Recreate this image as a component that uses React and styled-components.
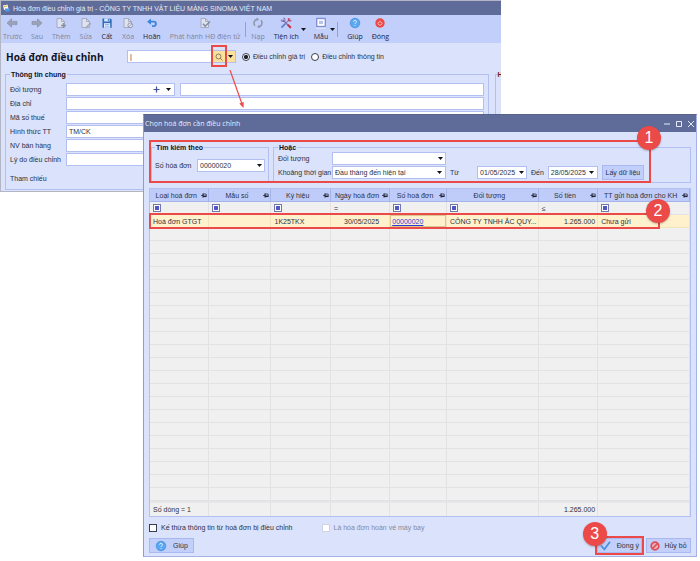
import React from 'react'
import styled, { createGlobalStyle } from 'styled-components'

const GlobalStyle = createGlobalStyle`
  * {
    box-sizing: border-box;
  }
  body {
    margin: 0;
    background-color: #fff;
    color: #2c3142;
    font-family: "Liberation Sans", Arial, sans-serif;
    font-size: 7px;
    line-height: 9px;
  }
  button, input, select {
    font: inherit;
    color: inherit;
    margin: 0;
  }
`

const UI_FONT = '"Open Sans", "Noto Sans", sans-serif'
const RED = '#eb4a48'

const Desktop = styled.main`
  position: relative;
  min-height: 100vh;
  overflow: hidden;
`

const MainWindow = styled.section`
  width: 71.5%;
  background-color: #dae2fc;
  border: 1px solid #b3b6c4;
  border-right: none;
  overflow: hidden;
`

const TitleBar = styled.header`
  display: flex;
  align-items: center;
  gap: ${({ $tall }) => ($tall ? '4px' : '3px')};
  height: ${({ $tall }) => ($tall ? '17px' : '14px')};
  padding: 0 ${({ $tall }) => ($tall ? '1px' : '2px')};
  background-color: #5f6c99;
  color: #e6eafa;
  font-family: ${({ $tall }) => ($tall ? UI_FONT : 'inherit')};
`

const TitleText = styled.span`
  flex: 1;
  white-space: nowrap;
`

const Toolbar = styled.nav`
  display: flex;
  align-items: center;
  gap: 9px;
  height: 28px;
  padding: 0 2px;
  background-color: #c2cffa;
  font-family: ${UI_FONT};
`

const ToolButton = styled.button`
  display: flex;
  flex-direction: column;
  align-items: center;
  gap: 3px;
  padding: 0;
  border: none;
  background-color: transparent;
  white-space: nowrap;
  color: ${({ disabled }) => (disabled ? '#7f859b' : '#20243c')};
`

const ToolGroup = styled.div`
  display: flex;
  align-items: center;
  gap: ${({ $gap }) => $gap || 2}px;
`

const ToolDivider = styled.span`
  width: 1px;
  height: 15px;
  background-color: #7fa9dc;
`

const HeadRow = styled.div`
  display: flex;
  align-items: center;
  height: 27px;
  padding-left: 5px;
`

const PageTitle = styled.h1`
  width: 121px;
  margin: 0;
  font-family: ${UI_FONT};
  font-size: 10px;
  line-height: 14px;
  font-weight: 700;
  color: #10131f;
  white-space: nowrap;
`

const Field = styled.div`
  display: flex;
  align-items: stretch;
  flex: ${({ $w }) => ($w ? `0 0 ${$w}px` : '1')};
  min-width: 0;
  height: 13px;
  background-color: #fff;
  border: 1px solid #b2bff0;
`

const FieldInput = styled.input`
  flex: 1;
  min-width: 0;
  padding: 0 0 0 2px;
  border: none;
  outline: none;
  background-color: transparent;
`

const FieldButton = styled.button`
  display: flex;
  align-items: center;
  justify-content: center;
  flex: 0 0 ${({ $wide }) => ($wide ? '12px' : '10px')};
  padding: 0;
  border: none;
  background-color: ${({ $gold }) => ($gold ? '#fbe19a' : 'transparent')};
`

const SelectBox = styled.div`
  display: grid;
  align-items: center;
  flex: 0 0 114px;
  height: 13px;
  background-color: #fff;
  border: 1px solid #b2bff0;

  select, svg {
    grid-area: 1 / 1;
  }
  select {
    appearance: none;
    width: 100%;
    padding: 0 12px 0 2px;
    border: none;
    outline: none;
    background-color: transparent;
  }
  svg {
    justify-self: end;
    margin-right: 3px;
    pointer-events: none;
  }
`

const SearchSlot = styled.div`
  position: relative;
  display: flex;
`

const Marker = styled.span`
  position: absolute;
  inset: ${({ $inset }) => $inset};
  height: ${({ $height }) => $height || 'auto'};
  border: 2px solid ${RED};
  pointer-events: none;
  z-index: 2;
`

const MarkerNumber = styled.span`
  position: absolute;
  top: -16px;
  ${({ $side }) => ($side === 'left' ? 'left: -14px;' : 'right: -12px;')}
  display: flex;
  align-items: center;
  justify-content: center;
  width: 24px;
  height: 24px;
  border-radius: 50%;
  background-color: ${RED};
  color: #fff;
  font-size: 16px;
  line-height: 16px;
  box-shadow: 0 1px 2px #00000040;
`

const Pointer = styled.svg`
  position: absolute;
  top: 19px;
  left: 16px;
  z-index: 3;
`

const Radio = styled.label`
  display: flex;
  align-items: center;
  gap: 3px;
  margin-left: 6px;
  white-space: nowrap;

  input {
    appearance: none;
    width: 8px;
    height: 8px;
    border: 1px solid #3a3f4f;
    border-radius: 50%;
    background-color: #fff;
  }
  input:checked {
    background-image: radial-gradient(#20242f 45%, #fff 55%);
  }
`

const MainBody = styled.div`
  display: flex;
  gap: 6px;
  padding: 0 0 1px 4px;
`

const Group = styled.fieldset`
  flex: ${({ $w }) => ($w ? `0 0 ${$w}px` : '1')};
  min-width: 0;
  margin: 0;
  padding: ${({ $pad }) => $pad || '0'};
  border: 1px solid #b2bff0;

  legend {
    padding: 0 1px;
    line-height: 9px;
    font-weight: 700;
    color: #10131f;
    white-space: nowrap;
  }
`

const CutGroup = styled(Group)`
  flex: 0 0 6px;
  border-right: none;

  legend {
    padding: 0;
    margin-left: 2px;
    color: #6b1f2c;
  }
`

const FormGrid = styled.div`
  display: grid;
  gap: 1px;
`

const FormRow = styled.div`
  display: flex;
  align-items: center;
  height: ${({ $tall }) => ($tall ? '22px' : '13px')};
`

const Label = styled.label`
  flex: 0 0 ${({ $w }) => $w}px;
  white-space: nowrap;
`

const Gap = styled.span`
  flex: 0 0 5px;
`

const Dialog = styled.section`
  position: absolute;
  top: 114px;
  left: 143px;
  right: 3px;
  background-color: #dae2fc;
  border: 1px solid #a5b2e6;
  border-top-color: #56628c;
  border-left-color: #8e9cd2;
`

const WindowButton = styled.button`
  display: flex;
  padding: 0 1px;
  border: none;
  background-color: transparent;
  color: #e6eafa;
`

const DialogBody = styled.div`
  padding: 8px 5px 3px;
`

const SearchPanel = styled.div`
  position: relative;
  display: flex;
  gap: 4px;
  height: 45px;
  padding: 3px 0 2px 2px;
`

const PeriodRow = styled.div`
  display: flex;
  align-items: center;
  gap: 4px;
  height: 14px;
`

const ActionButton = styled.button`
  display: flex;
  align-items: center;
  justify-content: center;
  gap: ${({ $gap }) => $gap || 6}px;
  min-width: ${({ $narrow }) => ($narrow ? '42px' : '45px')};
  height: 15px;
  padding: 0 2px;
  border: 1px solid #a9b8f0;
  background-color: #c2cffa;
  white-space: nowrap;
`

const GridWrap = styled.div`
  position: relative;
  margin-top: 3px;
  border: 1px solid #b2bff0;
`

const Grid = styled.table`
  width: 100%;
  table-layout: fixed;
  border-collapse: separate;
  border-spacing: 0;
  background-color: #f0f0f0;

  th, td {
    height: 13px;
    padding: 0 0 0 3px;
    border-right: 1px solid #e2e2e4;
    border-bottom: 1px solid #e2e2e4;
    text-align: left;
    font-weight: 400;
    white-space: nowrap;
    overflow: hidden;
  }
  thead th {
    padding: 0 1px;
    background-color: #bfccfa;
    border-color: #a4b3ea;
  }
  tfoot td {
    height: 15px;
    border-bottom: none;
    border-top: 2px solid #e6e6e8;
  }
  svg {
    display: block;
  }
`

const HeadCell = styled.div`
  display: flex;
  align-items: center;

  span {
    flex: 1;
    text-align: center;
  }
`

const InvoiceRow = styled.tr`
  td {
    background-color: #fff1cc;
    border-color: #f3e4bb;
  }
`

const Cell = styled.td`
  && {
    text-align: ${({ $align }) => $align || 'left'};
    ${({ $align }) => $align === 'right' && 'padding-right: 2px;'}
    ${({ $focus }) => $focus && 'box-shadow: inset 0 0 0 1px #d8c88f; padding-left: 2px;'}
  }
  a {
    color: #2b36d8;
  }
`

const Options = styled.div`
  display: flex;
  align-items: center;
  gap: 29px;
  height: 21px;
`

const Check = styled.label`
  display: flex;
  align-items: center;
  gap: 4px;
  white-space: nowrap;
  color: ${({ $off }) => ($off ? '#858a9c' : '#2c3142')};

  input {
    appearance: none;
    width: 8px;
    height: 8px;
    border: 1px solid ${({ $off }) => ($off ? '#cfd4e4' : '#3a3f4f')};
    background-color: #fff;
  }
`

const Footer = styled.footer`
  display: flex;
  align-items: center;
  gap: 4px;
`

const Confirm = styled.div`
  position: relative;
  margin-left: auto;
`

const Caret = () => (
  <svg width="5" height="3" viewBox="0 0 5 3"><path d="M0 0h5L2.5 3z" fill="#11131c" /></svg>
)

const ArrowIcon = ({ flip }) => (
  <svg width="12" height="12" viewBox="0 0 12 12">
    <path
      d="M1 6 5.5 1.8v2.6H11v3.2H5.5v2.6z"
      fill="#9aa1b8" stroke="#858ca4" strokeWidth="0.6"
      transform={flip ? 'rotate(180 6 6)' : undefined}
    />
  </svg>
)

const PageIcon = ({ mark }) => (
  <svg width="12" height="12" viewBox="0 0 12 12" fill="none" stroke="#a0a6b8" strokeWidth="0.9">
    <path d="M2 1.5h4.5L9.5 4.5v6H2z" fill="#dfe3ef" />
    <path d="M6.5 1.5v3h3" />
    {mark === 'add' && <path d="M8.5 6v5M6 8.5h5" stroke="#8a90a4" strokeWidth="1.4" />}
    {mark === 'edit' && <path d="M5.5 10.5 10 5.8l1 1-4.4 4z" fill="#b7bccb" />}
    {mark === 'delete' && <circle cx="8.3" cy="8.3" r="2.4" fill="#e4e6ef" stroke="#8a90a4" />}
    {mark === 'delete' && <path d="m6.8 9.8 3-3" stroke="#8a90a4" />}
    {mark === 'check' && <path d="m4 6.8 2.2 2.4L11 4.5" stroke="#858b9f" strokeWidth="1.6" />}
  </svg>
)

const SaveIcon = () => (
  <svg width="12" height="12" viewBox="0 0 12 12">
    <path d="M1.5 1.5h8l1.2 1.2v8H1.5z" fill="#2d6cb8" />
    <path d="M3.2 1.5h5.4v3H3.2z" fill="#dcecff" />
    <path d="M6.8 2h1v2h-1z" fill="#2d6cb8" />
    <path d="M3 6.2h6.2v4.5H3z" fill="#eef5ff" />
    <path d="M3.8 7.6h4.6M3.8 9.2h4.6" stroke="#5b93d4" strokeWidth="0.7" />
  </svg>
)

const UndoIcon = () => (
  <svg width="12" height="12" viewBox="0 0 12 12">
    <path d="M1 4.7 5 1.5v2.2h2.7a3 3 0 0 1 0 6.3H6V8.3h1.6a1.3 1.3 0 0 0 0-2.7H5v2.2z" fill="#3c86dc" />
  </svg>
)

const ReloadIcon = () => (
  <svg width="12" height="12" viewBox="0 0 12 12" fill="none" stroke="#9097aa" strokeWidth="1.6">
    <path d="M5.2 2.2A4 4 0 0 0 3 8.7M6.8 9.8A4 4 0 0 0 9 3.3" />
    <path d="M4.5.4 7 2.3 4.8 4.2zM7.5 7.8 5 9.8l2.5 1.8z" fill="#9097aa" stroke="none" />
  </svg>
)

const ToolsIcon = () => (
  <svg width="12" height="12" viewBox="0 0 12 12" fill="none" strokeLinecap="round">
    <path d="M3.2 3.2 10 10" stroke="#8d6fa8" strokeWidth="1.4" />
    <path d="M1.3 3a2 2 0 0 0 3.4.8A2 2 0 0 0 3.7 1" stroke="#8d6fa8" strokeWidth="1.1" />
    <path d="M10.2 1.8 6.5 5.3" stroke="#6a80c4" strokeWidth="1.1" />
    <path d="M5.2 6.8 2 10" stroke="#5f86d2" strokeWidth="1.8" />
    <path d="m8.3 8.3 2 2" stroke="#c6394e" strokeWidth="2.2" />
    <path d="M8.4 1.5a1.9 1.9 0 0 0 2.6 2.3" stroke="#c6394e" strokeWidth="1.1" />
  </svg>
)

const TemplateIcon = () => (
  <svg width="12" height="12" viewBox="0 0 12 12">
    <rect x="1" y="0.8" width="10" height="9.4" rx="1" fill="#8391d8" />
    <rect x="2.4" y="2.2" width="7.2" height="6.6" fill="#fff" />
    <rect x="4" y="3.8" width="4" height="3.2" fill="#b9c3ea" />
    <path d="M1.5 11.2h9" stroke="#f2f5ff" strokeWidth="0.9" />
  </svg>
)

const HelpIcon = () => (
  <svg width="12" height="12" viewBox="0 0 12 12">
    <circle cx="6" cy="6" r="4.8" fill="#5aa8f2" stroke="#3583d3" strokeWidth="0.6" />
    <path d="M4.6 4.7a1.4 1.4 0 1 1 2 1.3c-.5.2-.6.5-.6 1" fill="none" stroke="#fff" strokeWidth="0.8" />
    <circle cx="6" cy="8.5" r="0.5" fill="#fff" />
  </svg>
)

const PowerIcon = () => (
  <svg width="12" height="12" viewBox="0 0 12 12">
    <circle cx="6" cy="6" r="4.7" fill="#ee4444" />
    <path d="M4.6 4.8a2 2 0 1 0 2.8 0M6 3.6v2.2" fill="none" stroke="#ffd9d6" strokeWidth="0.8" />
  </svg>
)

const AppIcon = () => (
  <svg width="7" height="8" viewBox="0 0 7 8">
    <path d="M0 1.5 4.5.5l1 4.5-4.5 1z" fill="#f4f7ff" />
    <path d="M1 2.6 4 2" stroke="#e7b83c" strokeWidth="1.1" />
    <path d="M2 4.5h4.6V7.5H2z" fill="#4d9ae8" />
  </svg>
)

const SearchIcon = () => (
  <svg width="8" height="8" viewBox="0 0 8 8" fill="none" stroke="#77705c" strokeWidth="0.9">
    <circle cx="3.5" cy="3.5" r="2.5" />
    <path d="m5.3 5.3 2.2 2.2" />
  </svg>
)

const PinIcon = () => (
  <svg width="6" height="5" viewBox="0 0 6 5">
    <path d="M0 2.5h2M2 .2v4.6M2 1h3.2v2.6H2z" fill="none" stroke="#1c2030" strokeWidth="0.7" />
    <path d="M2 2.6h3.4v1.3H2z" fill="#1c2030" />
  </svg>
)

const FilterIcon = () => (
  <svg width="8" height="8" viewBox="0 0 8 8">
    <rect x="0.5" y="0.5" width="7" height="7" fill="#fff" stroke="#7377a8" />
    <rect x="2" y="2" width="4" height="4" fill="#5257c8" />
  </svg>
)

const AcceptIcon = () => (
  <svg width="11" height="11" viewBox="0 0 11 11">
    <path d="M1 5.5 4.3 9.3 10 1.8" fill="none" stroke="#4a90e0" strokeWidth="1.8" />
  </svg>
)

const CancelIcon = () => (
  <svg width="10" height="10" viewBox="0 0 10 10" fill="none" stroke="#dc4f58" strokeWidth="1.7">
    <circle cx="5" cy="5" r="3.8" fill="#eeb3bd" />
    <path d="m2.5 7.5 5-5" />
  </svg>
)

const columns = [
  { name: 'Loại hoá đơn', width: '11%', filter: 'box' },
  { name: 'Mẫu số', width: '11.5%', filter: 'box' },
  { name: 'Ký hiệu', width: '11%', filter: 'box' },
  { name: 'Ngày hoá đơn', width: '11%', filter: '=' },
  { name: 'Số hoá đơn', width: '10.5%', filter: 'box' },
  { name: 'Đối tượng', width: '17%', filter: 'box' },
  { name: 'Số tiền', width: '11%', filter: '≤' },
  { name: 'TT gửi hoá đơn cho KH', width: '17%', filter: 'box' },
]

const EMPTY_ROWS = 21

function MainToolbar() {
  return (
    <Toolbar>
      <ToolButton disabled><ArrowIcon />Trước</ToolButton>
      <ToolButton disabled><ArrowIcon flip />Sau</ToolButton>
      <ToolButton disabled><PageIcon mark="add" />Thêm</ToolButton>
      <ToolButton disabled><PageIcon mark="edit" />Sửa</ToolButton>
      <ToolButton><SaveIcon />Cất</ToolButton>
      <ToolButton disabled><PageIcon mark="delete" />Xóa</ToolButton>
      <ToolButton><UndoIcon />Hoãn</ToolButton>
      <ToolGroup $gap={5}>
        <ToolButton disabled><PageIcon mark="check" />Phát hành HĐ điện tử</ToolButton>
        <ToolDivider />
        <ToolButton disabled><ReloadIcon />Nạp</ToolButton>
      </ToolGroup>
      <ToolGroup $gap={8}>
        <ToolGroup>
          <ToolButton><ToolsIcon />Tiện ích</ToolButton>
          <Caret />
        </ToolGroup>
        <ToolGroup>
          <ToolButton><TemplateIcon />Mẫu</ToolButton>
          <Caret />
          <ToolDivider />
        </ToolGroup>
      </ToolGroup>
      <ToolButton><HelpIcon />Giúp</ToolButton>
      <ToolButton><PowerIcon />Đóng</ToolButton>
    </Toolbar>
  )
}

function TextRow({ id, label, value = '' }) {
  return (
    <FormRow>
      <Label $w={56} htmlFor={id}>{label}</Label>
      <Field><FieldInput id={id} defaultValue={value} /></Field>
    </FormRow>
  )
}

function Combo({ id, value, width }) {
  return (
    <Field $w={width}>
      <FieldInput id={id} defaultValue={value} />
      <FieldButton aria-label="Mở danh sách"><Caret /></FieldButton>
    </Field>
  )
}

function InvoiceWindow() {
  return (
    <MainWindow>
      <TitleBar>
        <AppIcon />
        <TitleText>Hóa đơn điều chỉnh giá trị - CÔNG TY TNHH VẬT LIỆU MÀNG SINOMA VIỆT NAM</TitleText>
      </TitleBar>
      <MainToolbar />
      <HeadRow>
        <PageTitle>Hoá đơn điều chỉnh</PageTitle>
        <Field $w={109}>
          <FieldInput aria-label="Hoá đơn" defaultValue="|" />
          <SearchSlot>
            <FieldButton $gold $wide aria-label="Tìm"><SearchIcon /></FieldButton>
            <Marker $inset="-6px -2px -5px -2px" />
            <Pointer width="20" height="40" viewBox="0 0 20 40">
              <path d="M1 0 13 34" stroke={RED} strokeWidth="1.2" />
              <path d="m14.5 38-4.2-4.4 4.4-1.6z" fill={RED} />
            </Pointer>
          </SearchSlot>
          <FieldButton $gold aria-label="Mở danh sách"><Caret /></FieldButton>
        </Field>
        <Radio><input type="radio" name="kind" defaultChecked />Điều chỉnh giá trị</Radio>
        <Radio><input type="radio" name="kind" />Điều chỉnh thông tin</Radio>
      </HeadRow>
      <MainBody>
        <Group $pad="4px 4px 0">
          <legend>Thông tin chung</legend>
          <FormGrid>
            <FormRow>
              <Label $w={56} htmlFor="customer">Đối tượng</Label>
              <Field $w={109}>
                <FieldInput id="customer" />
                <FieldButton $wide aria-label="Thêm đối tượng">
                  <svg width="7" height="7" viewBox="0 0 7 7"><path d="M3.5.5v6M.5 3.5h6" stroke="#3d4c9c" strokeWidth="1.2" /></svg>
                </FieldButton>
                <FieldButton $wide aria-label="Mở danh sách"><Caret /></FieldButton>
              </Field>
              <Gap />
              <Field><FieldInput aria-label="Tên đối tượng" /></Field>
            </FormRow>
            <TextRow id="address" label="Địa chỉ" />
            <TextRow id="tax" label="Mã số thuế" />
            <TextRow id="payment" label="Hình thức TT" value="TM/CK" />
            <TextRow id="seller" label="NV bán hàng" />
            <TextRow id="reason" label="Lý do điều chỉnh" />
            <FormRow $tall>Tham chiếu</FormRow>
          </FormGrid>
        </Group>
        <CutGroup><legend>H</legend></CutGroup>
      </MainBody>
    </MainWindow>
  )
}

function InvoiceGrid() {
  return (
    <GridWrap>
      <Grid>
        <colgroup>
          {columns.map((c) => <col key={c.name} style={{ width: c.width }} />)}
        </colgroup>
        <thead>
          <tr>
            {columns.map((c) => (
              <th key={c.name}><HeadCell><span>{c.name}</span><PinIcon /></HeadCell></th>
            ))}
          </tr>
        </thead>
        <tbody>
          <tr>
            {columns.map((c) => (
              <td key={c.name}>{c.filter === 'box' ? <FilterIcon /> : c.filter}</td>
            ))}
          </tr>
          <InvoiceRow>
            <Cell>Hoá đơn GTGT</Cell>
            <Cell />
            <Cell>1K25TKX</Cell>
            <Cell $align="center">30/05/2025</Cell>
            <Cell $focus><a href="#00000020">00000020</a></Cell>
            <Cell>CÔNG TY TNHH ẮC QUY...</Cell>
            <Cell $align="right">1.265.000</Cell>
            <Cell>Chưa gửi</Cell>
          </InvoiceRow>
          {Array.from({ length: EMPTY_ROWS }, (_, i) => (
            <tr key={i}>{columns.map((c) => <td key={c.name} />)}</tr>
          ))}
        </tbody>
        <tfoot>
          <tr>
            <Cell>Số dòng = 1</Cell>
            <td /><td /><td /><td /><td />
            <Cell $align="right">1.265.000</Cell>
            <td />
          </tr>
        </tfoot>
      </Grid>
      <Marker $inset="24px 30px auto -1px" $height="16px"><MarkerNumber>2</MarkerNumber></Marker>
    </GridWrap>
  )
}

function PickInvoiceDialog() {
  return (
    <Dialog role="dialog" aria-label="Chọn hoá đơn cần điều chỉnh">
      <TitleBar $tall>
        <TitleText>Chọn hoá đơn cần điều chỉnh</TitleText>
        <WindowButton aria-label="Thu nhỏ">
          <svg width="6" height="6" viewBox="0 0 6 6"><path d="M0 3h6" stroke="currentColor" /></svg>
        </WindowButton>
        <WindowButton aria-label="Phóng to">
          <svg width="6" height="6" viewBox="0 0 6 6"><path d="M.5.5h5v5h-5z" fill="none" stroke="currentColor" /></svg>
        </WindowButton>
        <WindowButton aria-label="Đóng">
          <svg width="6" height="6" viewBox="0 0 6 6"><path d="m0 0 6 6M6 0 0 6" stroke="currentColor" /></svg>
        </WindowButton>
      </TitleBar>
      <DialogBody>
        <SearchPanel>
          <Group $w={118} $pad="7px 3px 0">
            <legend>Tìm kiếm theo</legend>
            <FormRow>
              <Label $w={42} htmlFor="number">Số hóa đơn</Label>
              <Combo id="number" value="00000020" />
            </FormRow>
          </Group>
          <Group $pad="0 4px">
            <legend>Hoặc</legend>
            <FormRow>
              <Label $w={54} htmlFor="target">Đối tượng</Label>
              <Combo id="target" width={114} />
            </FormRow>
            <PeriodRow>
              <FormRow>
                <Label $w={54} htmlFor="period">Khoảng thời gian</Label>
                <SelectBox>
                  <select id="period"><option>Đầu tháng đến hiện tại</option></select>
                  <Caret />
                </SelectBox>
              </FormRow>
              <Label $w={23} htmlFor="from">Từ</Label>
              <Combo id="from" value="01/05/2025" width={50} />
              <Label $w={12} htmlFor="to">Đến</Label>
              <Combo id="to" value="28/05/2025" width={50} />
              <ActionButton $narrow>Lấy dữ liệu</ActionButton>
            </PeriodRow>
          </Group>
          <Marker $inset="0 40px 2px 0"><MarkerNumber>1</MarkerNumber></Marker>
        </SearchPanel>
        <InvoiceGrid />
        <Options>
          <Check><input type="checkbox" />Kế thừa thông tin từ hoá đơn bị điều chỉnh</Check>
          <Check $off><input type="checkbox" disabled />Là hóa đơn hoàn vé máy bay</Check>
        </Options>
        <Footer>
          <ActionButton><HelpIcon />Giúp</ActionButton>
          <Confirm>
            <ActionButton><AcceptIcon />Đồng ý</ActionButton>
            <Marker $inset="-2px"><MarkerNumber $side="left">3</MarkerNumber></Marker>
          </Confirm>
          <ActionButton $gap={4}><CancelIcon />Hủy bỏ</ActionButton>
        </Footer>
      </DialogBody>
    </Dialog>
  )
}

function App() {
  return (
    <Desktop>
      <GlobalStyle />
      <InvoiceWindow />
      <PickInvoiceDialog />
    </Desktop>
  )
}

export default App
